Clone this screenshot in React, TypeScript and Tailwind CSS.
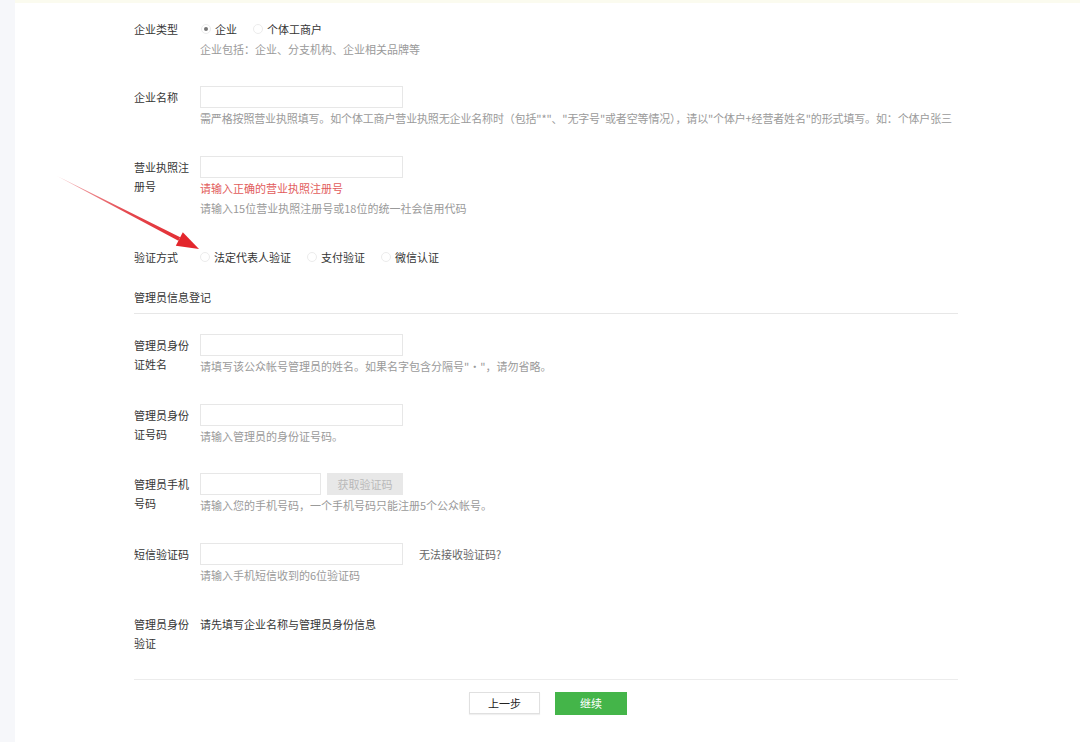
import React from 'react';

const font = { fontFamily: '"Noto Sans CJK SC", "Noto Sans", sans-serif' };

const Radio: React.FC<{ checked?: boolean; label: string }> = ({ checked, label }) => (
  <label className="flex items-center gap-[3px] mr-[16px]">
    <span className="w-[10px] h-[10px] rounded-full border border-[#ececec] flex items-center justify-center">
      {checked && <span className="w-[4px] h-[4px] rounded-full bg-[#777]" />}
    </span>
    <span className="text-[#353535] ml-[1px]">{label}</span>
  </label>
);

const Input: React.FC<{ w?: string }> = ({ w = 'w-[203px]' }) => (
  <div className={`${w} h-[22px] border border-[#e7e7e7] bg-white`} />
);

const Row: React.FC<{ label: React.ReactNode; className?: string; children: React.ReactNode }> = ({
  label,
  className,
  children,
}) => (
  <div className={`flex ${className || ''}`}>
    <div className="w-[66px] shrink-0 text-[#353535] leading-[19px] pr-[10px]">{label}</div>
    <div className="flex flex-col">{children}</div>
  </div>
);

const Help: React.FC<{ children: React.ReactNode; red?: boolean }> = ({ children, red }) => (
  <div className={`leading-[20px] whitespace-nowrap ${red ? 'text-[#e25c5c]' : 'text-[#9a9a9a]'}`}>{children}</div>
);

export default function App() {
  return (
    <div className="relative w-[1080px] h-[742px] bg-white flex text-[11px] overflow-hidden" style={font}>
      <div className="w-[15px] shrink-0 bg-[#f6f7fa]" />
      <div className="flex-1 flex flex-col">
        <div className="h-[3px] bg-[#fbfbef]" />
        <div className="pl-[119px] pr-[122px] pt-[16px] flex flex-col">
          <Row label={<div className="pt-[1px]">企业类型</div>}>
            <div className="flex items-center h-[20px] pl-[1px]">
              <Radio checked label="企业" />
              <Radio label="个体工商户" />
            </div>
            <Help>企业包括：企业、分支机构、企业相关品牌等</Help>
          </Row>

          <Row label={<div className="pt-[2px]">企业名称</div>} className="mt-[27px]">
            <Input />
            <div className="tracking-[-0.15px]">
              <Help>
                需严格按照营业执照填写。如个体工商户营业执照无企业名称时（包括"*"、"无字号"或者空等情况），请以"个体户+经营者姓名"的形式填写。如：个体户张三
              </Help>
            </div>
          </Row>

          <Row label={<div className="pt-[2px]">营业执照注册号</div>} className="mt-[28px]">
            <Input />
            <Help red>请输入正确的营业执照注册号</Help>
            <Help>请输入15位营业执照注册号或18位的统一社会信用代码</Help>
          </Row>

          <Row label={<div className="pt-[1px]">验证方式</div>} className="mt-[29px]">
            <div className="flex items-center h-[20px]">
              <Radio label="法定代表人验证" />
              <Radio label="支付验证" />
              <Radio label="微信认证" />
            </div>
          </Row>

          <div className="mt-[20px] leading-[20px] text-[#353535]">管理员信息登记</div>
          <div className="mt-[6px] h-px bg-[#e7e7e7]" />

          <Row label={<div className="pt-[2px]">管理员身份证姓名</div>} className="mt-[20px]">
            <Input />
            <Help>请填写该公众帐号管理员的姓名。如果名字包含分隔号"·"，请勿省略。</Help>
          </Row>

          <Row label={<div className="pt-[2px]">管理员身份证号码</div>} className="mt-[28px]">
            <Input />
            <Help>请输入管理员的身份证号码。</Help>
          </Row>

          <Row label={<div className="pt-[2px]">管理员手机号码</div>} className="mt-[27px]">
            <div className="flex gap-[6px]">
              <Input w="w-[121px]" />
              <div className="w-[76px] h-[22px] bg-[#e8e8e8] text-[#b9b9b9] flex items-center justify-center">
                获取验证码
              </div>
            </div>
            <Help>请输入您的手机号码，一个手机号码只能注册5个公众帐号。</Help>
          </Row>

          <Row label={<div className="pt-[2px]">短信验证码</div>} className="mt-[28px]">
            <div className="flex items-center">
              <Input />
              <span className="ml-[16px] text-[#666]">无法接收验证码?</span>
            </div>
            <Help>请输入手机短信收到的6位验证码</Help>
          </Row>

          <Row label="管理员身份验证" className="mt-[30px]">
            <div className="leading-[19px] text-[#353535]">请先填写企业名称与管理员身份信息</div>
          </Row>

          <div className="mt-[26px] h-px bg-[#ececec]" />

          <div className="mt-[12px] flex justify-center gap-[15px] pl-[4px]">
            <button className="w-[71px] h-[22px] border border-[#e0e0e0] bg-white text-[#222] text-[11px] shadow-[0_1px_1px_rgba(0,0,0,0.06)]">
              上一步
            </button>
            <button className="w-[72px] h-[23px] bg-[#44b549] text-white text-[11px]">继续</button>
          </div>
        </div>
      </div>

      <svg className="absolute left-0 top-0 pointer-events-none" width="1080" height="742">
        <defs>
          <linearGradient id="arr" x1="57" y1="176" x2="199" y2="249" gradientUnits="userSpaceOnUse">
            <stop offset="0" stopColor="#f2b4b8" />
            <stop offset="0.5" stopColor="#e4474d" />
            <stop offset="1" stopColor="#e3262c" />
          </linearGradient>
        </defs>
        <polygon points="57,176 180.2,237.2 178.4,240.8" fill="url(#arr)" />
        <polygon points="199,249 175.8,245.8 182.8,232.2" fill="#e3262c" />
      </svg>
    </div>
  );
}
